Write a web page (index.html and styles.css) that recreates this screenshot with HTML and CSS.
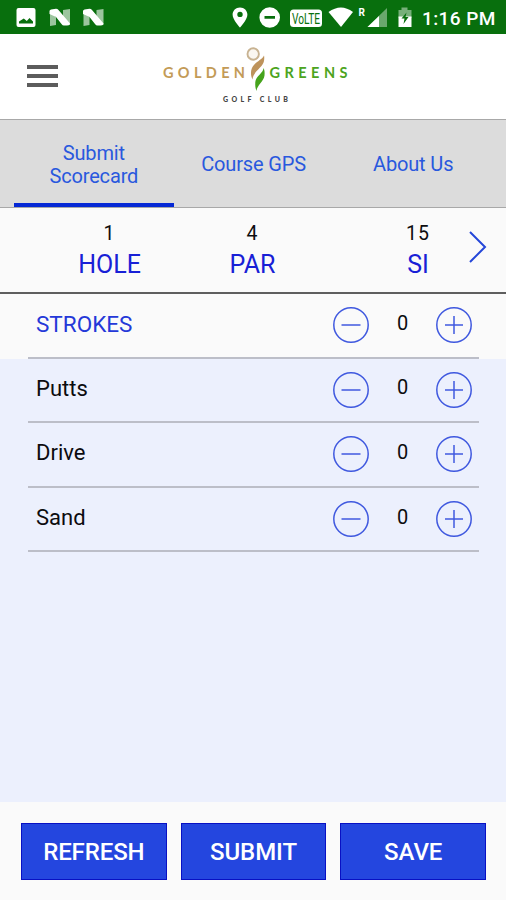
FILE: index.html
```html
<!DOCTYPE html>
<html lang="en">
<head>
<meta charset="utf-8">
<title>Golden Greens Golf Club</title>
<link rel="stylesheet" href="styles.css">
</head>
<body>
<div class="app">
  <div class="status">
    <svg width="420" height="34" viewBox="0 0 420 34" fill="#fff">
      <path fill-rule="evenodd" d="M18.500 8h15a2 2 0 0 1 2 2v15a2 2 0 0 1-2 2h-15a2 2 0 0 1-2-2V10a2 2 0 0 1 2-2zM19 23.500h14v-2l-3.500-3.500-2.700 3-3-2.500-4.800 3z"/>
      <g id="n"><path fill-opacity=".6" d="M50 12l6 5v8l-6 1zM63 10l7-1v15l-7-5z"/><path d="M49.500 11q0-1 1.500-1.500l5-.8q1.500 0 2.500 1.300L70 23.500v1q-1 .8-3 1h-3q-1.500 0-2.500-1.500L56 17l-6.500-3z"/></g>
      <use href="#n" x="33.500"/>
      <path fill-rule="evenodd" d="M240 7.500c-4.300 0-7.400 3.200-7.400 7.200 0 5 7.400 12.800 7.400 12.800s7.400-7.800 7.400-12.800c0-4-3.100-7.200-7.400-7.200zm0 4.200a2.700 2.700 0 1 1 0 5.400 2.700 2.700 0 0 1 0-5.400z"/>
      <path fill-rule="evenodd" d="M269.700 7.200a10.300 10.300 0 1 0 0 20.600 10.300 10.300 0 0 0 0-20.600zM264.500 16h10.500v2.800h-10.500z"/>
      <rect x="290" y="9.500" width="32" height="17.500" rx="3.500"/>
      <text x="292" y="23.500" class="volte" textLength="28" lengthAdjust="spacingAndGlyphs">VoLTE</text>
      <path d="M328.500 12Q341 3 353 12L341 27z"/>
      <text x="358.500" y="16" class="roaming">R</text>
      <path fill-opacity=".4" d="M387 8v19h-19.500z"/><path d="M379 16v11h-11.500z"/>
      <path fill-opacity=".45" d="M398.500 10h3V7.500h6V10h4v8h-13z"/>
      <path d="M398.500 16.500h13V27h-13z"/>
      <path fill="#086f0d" d="M406.500 12.500l-5 6h3l-1 5.500 5-7h-3z"/>
    </svg>
    <span class="time">1:16 PM</span>
  </div>
  <header class="header">
    <div class="menu"><i></i><i></i><i></i></div>
    <svg class="logo" width="190" height="60" viewBox="160 44 190 60">
      <text x="163" y="77.700" class="name gold" textLength="82" lengthAdjust="spacing">GOLDEN</text>
      <text x="269.500" y="77.700" class="name green" textLength="78" lengthAdjust="spacing">GREENS</text>
      <circle cx="253.200" cy="54" r="5.700" fill="#faf7f1" stroke="#c8b392" stroke-width="1.900"/>
      <path fill="#be935b" d="M264 55.500c-2 5-11.500 7-12.800 15-.5 3.500-.2 6 1.300 9 .4-8 10.500-12 11.500-18.500.3-2 .4-4 0-5.500z"/>
      <path fill="#45a31b" d="M263.500 68c0 5-7.800 8-8.200 14-.2 3.500 0 6 1.200 9 .5-6 7.300-9.500 8-15.500.4-3.500 0-5.500-1-7.500z"/>
      <text x="223" y="102" class="club" textLength="65" lengthAdjust="spacing">GOLF CLUB</text>
    </svg>
  </header>
  <nav class="tabs">
    <a class="tab active">Submit<br>Scorecard</a>
    <a class="tab">Course GPS</a>
    <a class="tab">About Us</a>
  </nav>
  <section class="hole">
    <div class="stat"><span>1</span><b>HOLE</b></div>
    <div class="stat"><span>4</span><b>PAR</b></div>
    <div class="stat last"><span>15</span><b>SI</b></div>
    <svg class="next" width="18" height="32" viewBox="0 0 18 32"><path d="M1 1l15 15L1 31" fill="none" stroke="#2446d8" stroke-width="2"/></svg>
  </section>
  <main class="rows">
    <div class="row strokes"><div class="line"><span class="label">STROKES</span>
      <svg class="btn" viewBox="0 0 38 38"><circle cx="19" cy="19" r="17.200"/><path d="M9.500 19h19"/></svg><span class="count">0</span>
      <svg class="btn" viewBox="0 0 38 38"><circle cx="19" cy="19" r="17.200"/><path d="M10 19h18M19 10v18"/></svg></div></div>
    <div class="row"><div class="line"><span class="label">Putts</span>
      <svg class="btn" viewBox="0 0 38 38"><circle cx="19" cy="19" r="17.200"/><path d="M9.500 19h19"/></svg><span class="count">0</span>
      <svg class="btn" viewBox="0 0 38 38"><circle cx="19" cy="19" r="17.200"/><path d="M10 19h18M19 10v18"/></svg></div></div>
    <div class="row"><div class="line"><span class="label">Drive</span>
      <svg class="btn" viewBox="0 0 38 38"><circle cx="19" cy="19" r="17.200"/><path d="M9.500 19h19"/></svg><span class="count">0</span>
      <svg class="btn" viewBox="0 0 38 38"><circle cx="19" cy="19" r="17.200"/><path d="M10 19h18M19 10v18"/></svg></div></div>
    <div class="row"><div class="line"><span class="label">Sand</span>
      <svg class="btn" viewBox="0 0 38 38"><circle cx="19" cy="19" r="17.200"/><path d="M9.500 19h19"/></svg><span class="count">0</span>
      <svg class="btn" viewBox="0 0 38 38"><circle cx="19" cy="19" r="17.200"/><path d="M10 19h18M19 10v18"/></svg></div></div>
  </main>
  <footer class="actions">
    <button>REFRESH</button><button>SUBMIT</button><button>SAVE</button>
  </footer>
</div>
</body>
</html>
```
FILE: styles.css
```css
* { box-sizing: border-box; }
body { margin: 0; font-family: Roboto, sans-serif; color: #0c0c0f; }
.app { width: 506px; height: 900px; display: flex; flex-direction: column; background: #ecf0fd; overflow: hidden; }
.status { height: 34px; flex: none; display: flex; align-items: center; background: #086f0d; }
.status svg { flex: none; }
.time { margin-left: 2px; padding-top: 2px; font-size: 19px; font-weight: 500; letter-spacing: 0.4px; color: #fff; white-space: nowrap; }
.volte { font: 400 15px Roboto, sans-serif; fill: #086f0d; }
.roaming { font: 700 10px Roboto, sans-serif; }
.header { height: 86px; flex: none; display: flex; align-items: flex-start; padding: 10px 0 0 27px; background: #fff; border-bottom: 1px solid #a8a8a8; }
.menu { width: 31px; margin: 21px 102px 0 0; display: flex; flex-direction: column; gap: 5px; }
.menu i { height: 4px; background: #5c5c5c; }
.name { font: 700 14.5px Lato, sans-serif; }
.gold { fill: #c39b57; }
.green { fill: #4ca420; }
.club { font: 900 7px Lato, sans-serif; fill: #444; }
.tabs { height: 88px; flex: none; display: flex; padding: 0 13px 0 14px; background: #dcdcdc; border-bottom: 1px solid #a8a8a8; }
.tab { flex: 1; display: flex; align-items: center; justify-content: center; text-align: center; border-top: 4px solid transparent; border-bottom: 4px solid transparent; padding-top: 2px; font-size: 20px; line-height: 23px; letter-spacing: -0.15px; color: #2958de; }
.tab.active { border-bottom-color: #0528d5; }
.hole { height: 86px; flex: none; display: flex; align-items: flex-start; padding: 14px 18px 0 38px; background: #fafafa; border-bottom: 2px solid #5e5e5e; }
.stat { width: 143px; flex: none; display: flex; flex-direction: column; align-items: center; }
.stat span { font-size: 19.5px; line-height: 24px; letter-spacing: 1px; }
.stat b { margin-top: 4px; font-size: 25px; font-weight: 400; line-height: 30px; color: #1820d6; }
.stat.last { width: 130px; margin-left: 29px; }
.next { margin: 9px 0 0 -14px; flex: none; }
.rows { flex: 1; }
.row { height: 64.6px; padding: 0 27px 0 28px; }
.row.strokes { height: 64.6px; background: #fafafa; }
.line { height: 100%; display: flex; align-items: center; padding: 0 6px 0 8px; border-bottom: 2px solid #bcbec8; }
.label { flex: 1; font-size: 22px; padding-bottom: 3px; }
.strokes .label { color: #2438d8; font-size: 22.5px; }
.btn { width: 38px; height: 38px; flex: none; fill: none; stroke: #4059df; stroke-width: 1.5; }
.count { width: 65px; text-align: center; font-size: 20px; padding-bottom: 5px; }
.actions { height: 98px; flex: none; display: flex; align-items: flex-start; gap: 14px; padding: 21px 20px 0 21px; background: #fafafa; }
.actions button { flex: 1; height: 57px; padding: 1px 0 0; border: 1.5px solid #0810c4; border-radius: 0; background: #2446df; color: #fff; font: 500 24px Roboto, sans-serif; letter-spacing: -0.1px; }
```
